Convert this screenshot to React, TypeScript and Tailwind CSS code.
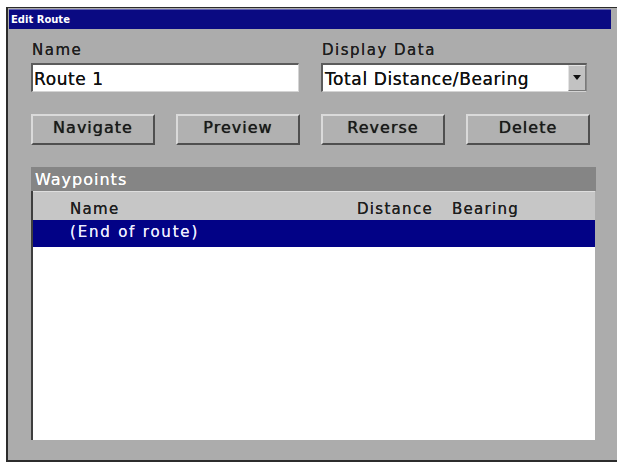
import React from 'react';

const font = { fontFamily: '"DejaVu Sans", "Liberation Sans", sans-serif' };

function Bevel({ label }: { label: string }) {
  return (
    <button className="w-[124px] h-[31px] bg-[#b1b1b1] border-t-2 border-l-2 border-[#dadada] border-r-2 border-b-2 border-r-[#4f4f4f] border-b-[#4f4f4f] flex items-center justify-center pb-[3px] text-[16px] leading-[18px] tracking-[1px] text-[#1a1a1a] [text-shadow:0_0_0.7px_#1a1a1a]">
      {label}
    </button>
  );
}

export default function App() {
  return (
    <div className="w-[617px] h-[462px] bg-white pl-[6px] pt-[7px] overflow-hidden" style={font}>
      <div className="w-[611px] h-[455px] bg-[#acacac] border-l-2 border-t border-b-2 border-[#2c2c2c] pl-[1px] pt-[1px]">
        {/* Title bar */}
        <div className="w-[602px] h-[20px] bg-[#0a0a82] border-t border-[#6464b4] flex items-center pl-[2px]">
          <span className="text-[10px] leading-[12px] font-bold text-white">Edit Route</span>
        </div>

        <div className="pl-[22px]">
          {/* Name + Display Data */}
          <div className="grid grid-cols-[268px_266px] gap-x-[22px] mt-[12px]">
            <div className="text-[15px] leading-[18px] tracking-[1.5px] text-[#1e1e1e] pl-[1px] [text-shadow:0_0_0.6px_#1e1e1e]">Name</div>
            <div className="text-[15px] leading-[18px] tracking-[1.5px] text-[#1e1e1e] pl-[1px] [text-shadow:0_0_0.6px_#1e1e1e]">Display Data</div>
            <div className="mt-[4px] h-[29px] bg-white border-t-2 border-l-2 border-[#5c5c5c] border-r border-b border-r-[#d4d4d4] border-b-[#d4d4d4] pt-[4px] pl-[1px] text-[17px] leading-[20px] tracking-[0.6px] text-[#111] [text-shadow:0_0_0.5px_#111]">
              Route 1
            </div>
            <div className="mt-[4px] h-[29px] bg-white border-t-2 border-l-2 border-[#5c5c5c] border-r border-b border-r-[#8a8a8a] border-b-[#d4d4d4] flex">
              <div className="flex-1 pt-[4px] pl-[2px] text-[17px] leading-[20px] tracking-[0.6px] text-[#111] [text-shadow:0_0_0.5px_#111]">
                Total Distance/Bearing
              </div>
              <div className="w-[18px] bg-[#c2c2c2] border-t border-l border-[#e4e4e4] border-r border-b border-r-[#7a7a7a] border-b-[#7a7a7a] flex justify-center pt-[9px]">
                <svg width="8" height="5" viewBox="0 0 8 5">
                  <path d="M0 0 H8 L4 5 Z" fill="#111" />
                </svg>
              </div>
            </div>
          </div>

          {/* Buttons */}
          <div className="flex gap-[21px] mt-[22px]">
            <Bevel label="Navigate" />
            <Bevel label="Preview" />
            <Bevel label="Reverse" />
            <Bevel label="Delete" />
          </div>

          {/* Waypoints panel */}
          <div className="w-[565px] mt-[22px]">
            <div className="h-[24px] bg-[#858585] pt-[4px] pl-[4px] text-[16px] leading-[18px] tracking-[1px] text-white [text-shadow:0_0_0.6px_#ffffff]">
              Waypoints
            </div>
            <div className="w-[564px] h-[249px] bg-white border-l-2 border-[#3e3e3e] flex flex-col">
              <div className="h-[29px] bg-[#c6c6c6] border-t border-[#dedede] grid grid-cols-[324px_95px_1fr] pt-[8px] text-[15px] leading-[18px] tracking-[1.3px] text-[#1e1e1e] [text-shadow:0_0_0.6px_#1e1e1e]">
                <span className="pl-[37px]">Name</span>
                <span>Distance</span>
                <span>Bearing</span>
              </div>
              <div className="h-[27px] bg-[#020286] pt-[3px] pl-[37px] text-[15px] leading-[18px] tracking-[1.8px] text-[#ececff] [text-shadow:0_0_0.6px_#ececff]">
                (End of route)
              </div>
              <div className="flex-1 bg-white" />
            </div>
          </div>
        </div>
      </div>
    </div>
  );
}
